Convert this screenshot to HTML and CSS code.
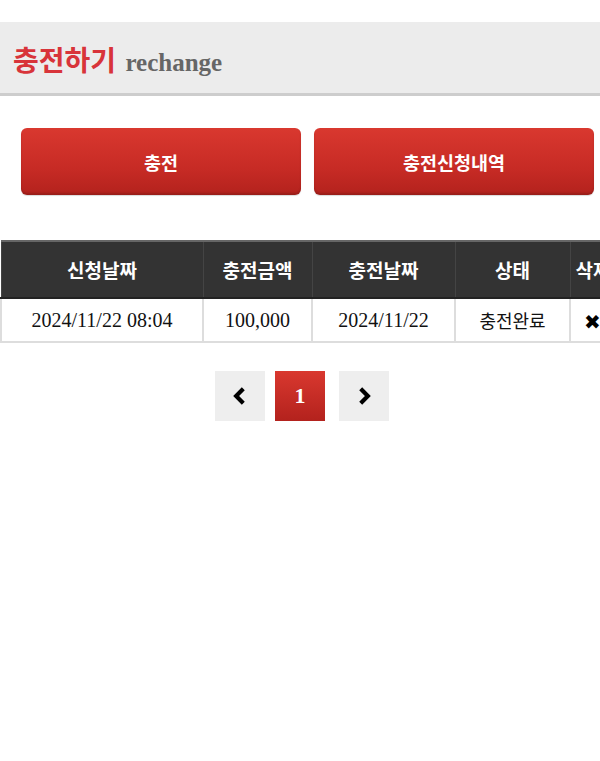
FILE: index.html
```html
<!DOCTYPE html>
<html>
<head>
    <meta charset="utf-8">
    <title>충전하기</title>
    <link rel="stylesheet" href="styles.css">
</head>
<body>
    <div class="page">
        <div class="title-bar">
            <h1>충전하기 <span class="sub">rechange</span></h1>
        </div>

        <div class="btn-row">
            <a class="red-btn" href="#">충전</a>
            <a class="red-btn" href="#">충전신청내역</a>
        </div>

        <div class="table-wrap">
            <table class="list">
                <thead>
                    <tr>
                        <th class="c1">신청날짜</th>
                        <th class="c2">충전금액</th>
                        <th class="c3">충전날짜</th>
                        <th class="c4">상태</th>
                        <th class="c5">삭제</th>
                    </tr>
                </thead>
                <tbody>
                    <tr>
                        <td class="num">2024/11/22 08:04</td>
                        <td class="num">100,000</td>
                        <td class="num">2024/11/22</td>
                        <td class="kor">충전완료</td>
                        <td class="del">&#10006;</td>
                    </tr>
                </tbody>
            </table>
        </div>

        <div class="paging">
            <a class="pg prev" href="#">
                <svg viewBox="0 0 20 20"><path d="M13 3.5 L6.5 10 L13 16.5"/></svg>
            </a>
            <a class="pg active" href="#">1</a>
            <a class="pg next" href="#">
                <svg viewBox="0 0 20 20"><path d="M7 3.5 L13.5 10 L7 16.5"/></svg>
            </a>
        </div>
    </div>
</body>
</html>
```

FILE: styles.css
```css
* {
    margin: 0;
    padding: 0;
    box-sizing: border-box;
}

body {
    background: #fff;
    font-family: "Noto Sans CJK KR", "Noto Sans", sans-serif;
    overflow: hidden;
}

.page {
    width: 600px;
    padding-top: 22px;
}

.title-bar {
    height: 74px;
    background: #ececec;
    border-bottom: 3px solid #cdcdcd;
    padding: 0 13px;
    display: flex;
    align-items: center;
}

h1 {
    font-size: 28px;
    font-weight: 700;
    color: #d8343a;
    line-height: 1;
    margin-top: 4px;
}

h1 .sub {
    font-family: "Liberation Serif", serif;
    font-size: 25px;
    color: #666;
    margin-left: 3px;
}

.btn-row {
    display: flex;
    gap: 13px;
    padding: 32px 6px 0 21px;
}

.red-btn {
    flex: 1;
    height: 67px;
    display: flex;
    align-items: center;
    justify-content: center;
    border-radius: 6px;
    background: linear-gradient(to bottom, #d9382f 0%, #c72b25 60%, #b3221d 100%);
    box-shadow: inset 0 -2px 2px rgba(0,0,0,0.15), 0 1px 1px rgba(0,0,0,0.15);
    color: #fff;
    font-size: 18.5px;
    font-weight: 700;
    text-decoration: none;
}

.table-wrap {
    margin-top: 45px;
    width: 600px;
    overflow: hidden;
}

.list {
    width: 615px;
    border-collapse: collapse;
    table-layout: fixed;
}

.list th {
    height: 57px;
    background: #333;
    color: #fff;
    font-size: 19px;
    font-weight: 700;
    border-top: 2px solid #666;
    border-bottom: 2px solid #222;
    border-left: 1px solid #444;
    border-right: 1px solid #444;
}

.list .c1 { width: 202px; }
.list .c2 { width: 109px; }
.list .c3 { width: 143px; }
.list .c4 { width: 115px; }
.list .c5 { width: 46px; }

.list td {
    height: 44px;
    text-align: center;
    border: 2px solid #ddd;
    color: #111;
}

.list td.num {
    font-family: "Liberation Serif", serif;
    font-size: 20px;
}

.list td.kor {
    font-size: 18px;
}

.list td.del {
    font-size: 20px;
    color: #000;
    text-align: left;
    padding-left: 13px;
}

.paging {
    display: flex;
    justify-content: center;
    margin-top: 28px;
    padding-left: 4px;
}

.pg {
    width: 50px;
    height: 50px;
    display: flex;
    align-items: center;
    justify-content: center;
    background: #eee;
    text-decoration: none;
}

.pg.prev {
    margin-right: 10px;
}

.pg.next {
    margin-left: 14px;
}

.pg svg {
    width: 22px;
    height: 22px;
    fill: none;
    stroke: #000;
    stroke-width: 3.8;
}

.pg.active {
    background: linear-gradient(to bottom, #d9382f 0%, #b3221d 100%);
    color: #fff;
    font-family: "Liberation Serif", serif;
    font-weight: 700;
    font-size: 22px;
}
```
